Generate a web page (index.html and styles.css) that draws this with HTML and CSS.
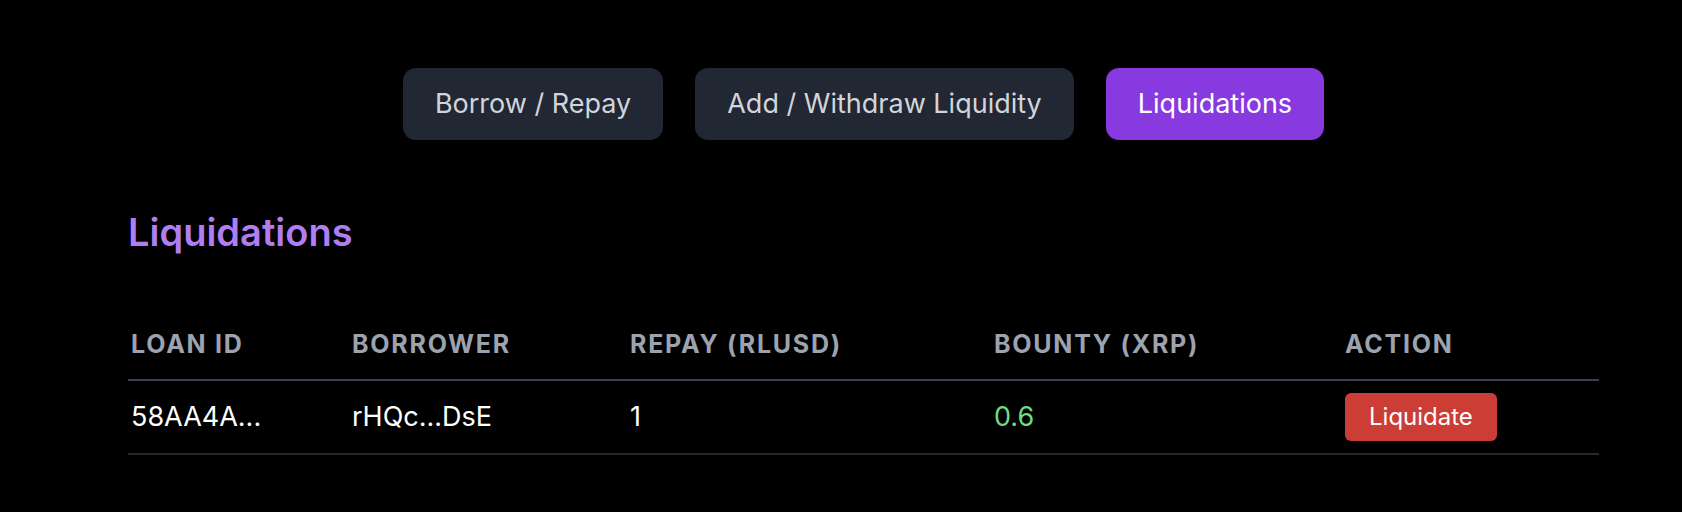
FILE: index.html
```html
<!DOCTYPE html>
<html lang="en">
<head>
<meta charset="utf-8">
<title>Liquidations</title>
<link rel="stylesheet" href="styles.css">
</head>
<body>
<div class="page">
  <nav class="tabs">
    <button class="tab">Borrow / Repay</button>
    <button class="tab">Add / Withdraw Liquidity</button>
    <button class="tab tab-active">Liquidations</button>
  </nav>
  <h2 class="title">Liquidations</h2>
  <table class="loans">
    <colgroup>
      <col class="c1"><col class="c2"><col class="c3"><col class="c4"><col class="c5">
    </colgroup>
    <thead>
      <tr>
        <th>Loan ID</th>
        <th>Borrower</th>
        <th>Repay (RLUSD)</th>
        <th>Bounty (XRP)</th>
        <th>Action</th>
      </tr>
    </thead>
    <tbody>
      <tr>
        <td>58AA4A...</td>
        <td>rHQc...DsE</td>
        <td>1</td>
        <td class="bounty">0.6</td>
        <td><button class="liquidate">Liquidate</button></td>
      </tr>
    </tbody>
  </table>
</div>
</body>
</html>
```

FILE: styles.css
```css
html, body {
  margin: 0;
  background: #000;
}
body {
  font-family: Inter, "Noto Sans", "Liberation Sans", sans-serif;
  color: #fff;
}
.page {
  width: 1471px;
  margin-left: 128px;
  padding-top: 68px;
}
.tabs {
  display: flex;
  justify-content: center;
  gap: 32px;
}
.tab {
  font-family: inherit;
  font-size: 27px;
  line-height: 40px;
  padding: 16px 32px;
  border: 0;
  border-radius: 13px;
  background: #212833;
  color: #d1d5db;
}
.tab-active {
  background: #883ae0;
  color: #fff;
}
.title {
  margin: 70px 0 0 0;
  font-size: 38px;
  line-height: 44px;
  font-weight: 600;
  color: #b07ef2;
}
.loans {
  margin-top: 54px;
  width: 1471px;
  border-collapse: collapse;
  table-layout: fixed;
}
.c1 { width: 221px; }
.c2 { width: 278px; }
.c3 { width: 364px; }
.c4 { width: 351px; }
.c5 { width: 257px; }
.loans th {
  text-align: left;
  font-size: 25px;
  line-height: 32px;
  font-weight: 700;
  letter-spacing: 0.07em;
  text-transform: uppercase;
  color: #9ca3af;
  padding: 20px 3px 19px;
  border-bottom: 2px solid #3a414d;
}
.loans td {
  font-size: 27px;
  line-height: 36px;
  padding: 12px 3px;
  border-bottom: 2px solid #232833;
  vertical-align: middle;
}
.bounty {
  color: #6fdc85;
}
.liquidate {
  font-family: inherit;
  font-size: 24px;
  line-height: 48px;
  height: 48px;
  padding: 0 24px;
  border: 0;
  border-radius: 6px;
  background: #cc3d35;
  color: #fff;
  display: block;
}
```
